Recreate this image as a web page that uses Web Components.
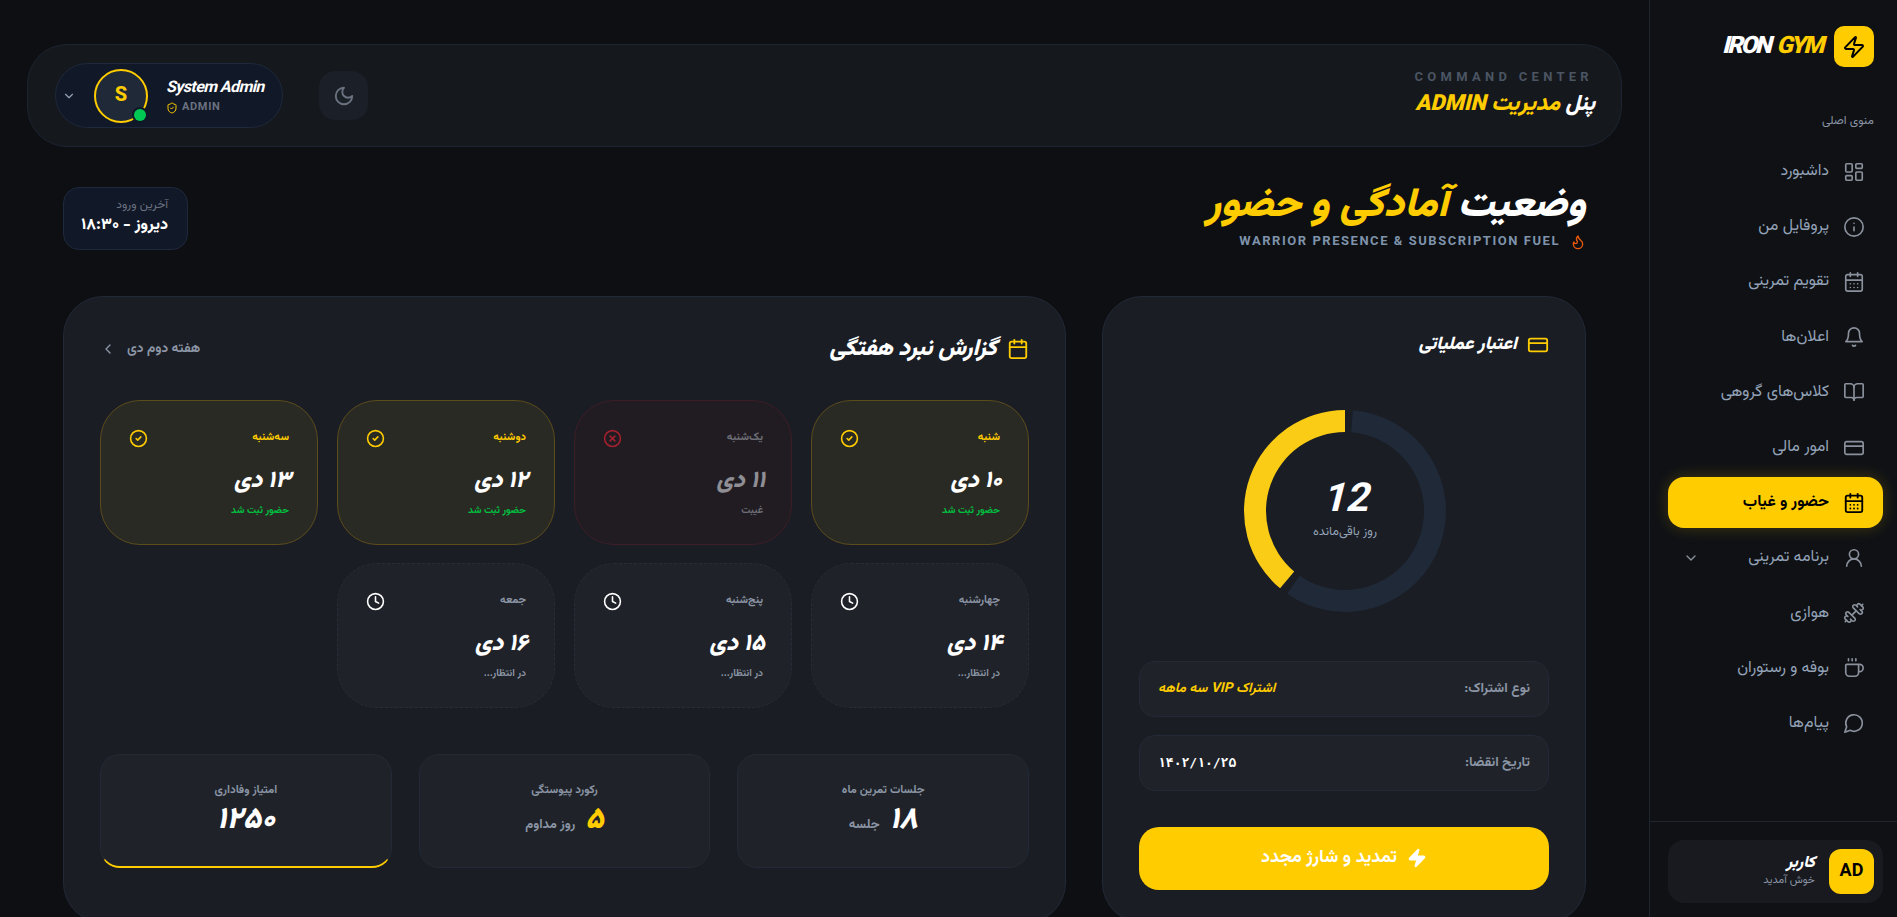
<!DOCTYPE html>
<html lang="fa" dir="rtl">
<head>
<meta charset="utf-8">
<title>Iron Gym</title>
<style>
  html, body { margin: 0; height: 917px; overflow: hidden; background: #0d0f13; }
  body { font-family: Vazirmatn, Roboto, sans-serif; color: #fff; }
</style>
</head>
<body>
<gym-app></gym-app>

<script>
const ICONS = {
  dashboard: '<rect width="7" height="9" x="3" y="3" rx="1"/><rect width="7" height="5" x="14" y="3" rx="1"/><rect width="7" height="9" x="14" y="12" rx="1"/><rect width="7" height="5" x="3" y="16" rx="1"/>',
  info: '<circle cx="12" cy="12" r="10"/><path d="M12 16v-4"/><path d="M12 8h.01"/>',
  days: '<path d="M8 2v4"/><path d="M16 2v4"/><rect width="18" height="18" x="3" y="4" rx="2"/><path d="M3 10h18"/><path d="M8 14h.01"/><path d="M12 14h.01"/><path d="M16 14h.01"/><path d="M8 18h.01"/><path d="M12 18h.01"/><path d="M16 18h.01"/>',
  calendar: '<path d="M8 2v4"/><path d="M16 2v4"/><rect width="18" height="18" x="3" y="4" rx="2"/><path d="M3 10h18"/>',
  bell: '<path d="M6 8a6 6 0 0 1 12 0c0 7 3 9 3 9H3s3-2 3-9"/><path d="M10.3 21a1.94 1.94 0 0 0 3.4 0"/>',
  book: '<path d="M12 7v14"/><path d="M3 18a1 1 0 0 1-1-1V4a1 1 0 0 1 1-1h5a4 4 0 0 1 4 4 4 4 0 0 1 4-4h5a1 1 0 0 1 1 1v13a1 1 0 0 1-1 1h-6a3 3 0 0 0-3 3 3 3 0 0 0-3-3z"/>',
  card: '<rect width="20" height="14" x="2" y="5" rx="2"/><line x1="2" x2="22" y1="10" y2="10"/>',
  user: '<circle cx="12" cy="8" r="5"/><path d="M20 21a8 8 0 0 0-16 0"/>',
  dumbbell: '<g transform="matrix(-1 0 0 1 24 0)"><path d="M14.4 14.4 9.6 9.6"/><path d="M18.657 21.485a2 2 0 1 1-2.829-2.828l-1.767 1.768a2 2 0 1 1-2.829-2.829l6.364-6.364a2 2 0 1 1 2.829 2.829l-1.768 1.767a2 2 0 1 1 2.828 2.829z"/><path d="m21.5 21.5-1.4-1.4"/><path d="M3.9 3.9 2.5 2.5"/><path d="M6.404 12.768a2 2 0 1 1-2.829-2.829l1.768-1.767a2 2 0 1 1-2.828-2.829l2.828-2.828a2 2 0 1 1 2.829 2.828l1.767-1.768a2 2 0 1 1 2.829 2.829z"/></g>',
  coffee: '<path d="M10 2v2"/><path d="M14 2v2"/><path d="M16 8a1 1 0 0 1 1 1v8a4 4 0 0 1-4 4H7a4 4 0 0 1-4-4V9a1 1 0 0 1 1-1h14a4 4 0 1 1 0 8h-1"/><path d="M6 2v2"/>',
  message: '<path d="M7.9 20A9 9 0 1 0 4 16.1L2 22Z"/>',
  chevronDown: '<path d="m6 9 6 6 6-6"/>',
  chevronLeft: '<path d="m15 18-6-6 6-6"/>',
  moon: '<path d="M12 3a6 6 0 0 0 9 9 9 9 0 1 1-9-9Z"/>',
  zap: '<path d="M4 14a1 1 0 0 1-.78-1.63l9.9-10.2a.5.5 0 0 1 .86.46l-1.92 6.02A1 1 0 0 0 13 10h7a1 1 0 0 1 .78 1.63l-9.9 10.2a.5.5 0 0 1-.86-.46l1.92-6.02A1 1 0 0 0 11 14z"/>',
  flame: '<path d="M8.5 14.5A2.5 2.5 0 0 0 11 12c0-1.38-.5-2-1-3-1.072-2.143-.224-4.054 2-6 .5 2.5 2 4.9 4 6.5 2 1.6 3 3.5 3 5.5a7 7 0 1 1-14 0c0-1.153.433-2.294 1-3a2.5 2.5 0 0 0 2.5 2.5z"/>',
  shield: '<path d="M20 13c0 5-3.5 7.5-7.66 8.95a1 1 0 0 1-.67-.01C7.5 20.5 4 18 4 13V6a1 1 0 0 1 1-1c2 0 4.5-1.2 6.24-2.72a1.17 1.17 0 0 1 1.52 0C14.51 3.81 17 5 19 5a1 1 0 0 1 1 1z"/><path d="m9 12 2 2 4-4"/>',
  check: '<circle cx="12" cy="12" r="10"/><path d="m9 12 2 2 4-4"/>',
  cross: '<circle cx="12" cy="12" r="10"/><path d="m15 9-6 6"/><path d="m9 9 6 6"/>',
  clock: '<circle cx="12" cy="12" r="10"/><polyline points="12 6 12 12 16 14"/>'
};

class GymIcon extends HTMLElement {
  connectedCallback() {
    const size = this.getAttribute("size") || 20;
    const width = this.getAttribute("stroke") || 2;
    const fill = this.hasAttribute("solid") ? "currentColor" : "none";
    this.attachShadow({ mode: "open" }).innerHTML = `
      <style>:host { display: inline-flex; flex: none; } svg { display: block; }</style>
      <svg width="${size}" height="${size}" viewBox="0 0 24 24" fill="${fill}" stroke="currentColor"
        stroke-width="${width}" stroke-linecap="round" stroke-linejoin="round">${ICONS[this.getAttribute("name")]}</svg>`;
  }
}

class NavItem extends HTMLElement {
  connectedCallback() {
    const active = this.hasAttribute("active");
    const more = this.hasAttribute("more") ? `<gym-icon class="more" name="chevronDown" size="16"></gym-icon>` : "";
    this.attachShadow({ mode: "open" }).innerHTML = `
      <style>
        :host { display: flex; align-items: center; gap: 14px; height: 51.2px; padding: 0 18px 0 15px;
          border-radius: 16px; color: #94a3b8; font-size: 16px; }
        :host([active]) { background: #ffcc00; color: #000; font-weight: 700; box-shadow: 0 0 16px rgba(255,204,0,.22); }
        .ic { color: #8a919c; display: flex; }
        :host([active]) .ic { color: #000; }
        .more { margin-right: auto; color: #8a919c; }
      </style>
      <span class="ic"><gym-icon name="${this.getAttribute("icon")}" size="22" stroke="${active ? 2 : 1.8}"></gym-icon></span>
      <slot></slot>${more}`;
  }
}

class GymSidebar extends HTMLElement {
  connectedCallback() {
    this.attachShadow({ mode: "open" }).innerHTML = `
      <style>
        :host { display: flex; flex-direction: column; width: 248px; height: 917px; flex: none; box-sizing: border-box;
          background: #0f1115; border-left: 1px solid #1e2430; }
        .logo { display: flex; align-items: center; gap: 12px; padding: 26px 23px 0 0; }
        .mark { width: 40px; height: 41px; border-radius: 10px; background: #ffcc00; color: #000;
          display: grid; place-items: center; }
        .brand { font-style: italic; font-weight: 900; font-size: 24px; line-height: 1; letter-spacing: -2.2px; word-spacing: 3px; direction: ltr; }
        .brand b { color: #ffcc00; font-weight: 900; }
        .caption { font-size: 12px; color: #8b95a5; padding: 47px 23px 0 0; line-height: 14px; }
        nav { display: flex; flex-direction: column; gap: 4px; padding: 18px 14px 0 18px; flex: 1; }
        .foot { border-top: 1px solid #1e2430; padding: 18px 14px 14px 18px; }
        .user { display: flex; align-items: center; gap: 14px; height: 63px; padding: 0 9px; background: #181a1f;
          border-radius: 16px; box-sizing: border-box; }
        .ava { width: 45px; height: 45px; border-radius: 12px; background: #ffcc00; color: #000; font-weight: 700;
          font-size: 18px; display: grid; place-items: center; }
        .who { font-size: 16px; font-weight: 900; font-style: italic; line-height: 19px; margin-top: -2px; }
        .hi { font-size: 11px; color: #8b95a5; line-height: 15px; }
      </style>
      <div class="logo">
        <span class="mark"><gym-icon name="zap" size="24"></gym-icon></span>
        <span class="brand">IRON <b>GYM</b></span>
      </div>
      <div class="caption">منوی اصلی</div>
      <nav>
        <nav-item icon="dashboard">داشبورد</nav-item>
        <nav-item icon="info">پروفایل من</nav-item>
        <nav-item icon="days">تقویم تمرینی</nav-item>
        <nav-item icon="bell">اعلان‌ها</nav-item>
        <nav-item icon="book">کلاس‌های گروهی</nav-item>
        <nav-item icon="card">امور مالی</nav-item>
        <nav-item icon="days" active>حضور و غیاب</nav-item>
        <nav-item icon="user" more>برنامه تمرینی</nav-item>
        <nav-item icon="dumbbell">هوازی</nav-item>
        <nav-item icon="coffee">بوفه و رستوران</nav-item>
        <nav-item icon="message">پیام‌ها</nav-item>
      </nav>
      <div class="foot">
        <div class="user">
          <span class="ava">AD</span>
          <div><div class="who">کاربر</div><div class="hi">خوش آمدید</div></div>
        </div>
      </div>`;
  }
}

class GymHeader extends HTMLElement {
  connectedCallback() {
    this.attachShadow({ mode: "open" }).innerHTML = `
      <style>
        :host { display: flex; align-items: center; height: 103px; box-sizing: border-box; padding: 0 26px 0 27px;
          background: #15181d; border: 1px solid #1c2431; border-radius: 40px; }
        .titles { flex: 1; }
        .cc { font-size: 13px; font-weight: 700; letter-spacing: .33em; color: #4b5563; line-height: 16px; margin-bottom: 5px; padding-right: 2px; }
        .panel { font-size: 22px; font-weight: 900; line-height: 28px; color: #ffcc00; font-style: italic; margin-bottom: 2px; }
        .panel span { color: #fff; }
        .moon { width: 49px; height: 49px; border-radius: 16px; background: #1b1f27; color: #6b7280; display: grid; place-items: center; margin-left: 36px; }
        .pill { display: flex; align-items: center; width: 228px; height: 65px; box-sizing: border-box; direction: ltr;
          background: #111827; border: 1px solid #1e293b; border-radius: 33px; padding-left: 6px; }
        .chev { color: #94a3b8; }
        .avatar { position: relative; width: 54px; height: 54px; box-sizing: border-box; border: 2px solid #ffcc00; border-radius: 50%;
          background: #1f2937; color: #ffcc00; font-weight: 800; font-size: 20px; display: grid; place-items: center; margin-left: 18px; }
        .dot { position: absolute; right: 0; bottom: 0; width: 12px; height: 12px; background: #00c853; border-radius: 50%; box-shadow: 0 0 0 2px #111827; }
        .id { margin-left: 18px; padding-top: 3px; }
        .name { font-style: italic; font-weight: 700; font-size: 16px; line-height: 20px; letter-spacing: -.6px; white-space: nowrap; }
        .role { display: flex; align-items: center; gap: 4px; font-size: 11px; font-weight: 700; letter-spacing: .06em; color: #6b7280; line-height: 16px; margin-top: 1px; }
        .role gym-icon { color: #ffcc00; }
      </style>
      <div class="titles">
        <div class="cc">COMMAND CENTER</div>
        <div class="panel"><span>پنل</span> مدیریت ADMIN</div>
      </div>
      <div class="moon"><gym-icon name="moon" size="22"></gym-icon></div>
      <div class="pill">
        <gym-icon class="chev" name="chevronDown" size="14"></gym-icon>
        <div class="avatar">S<span class="dot"></span></div>
        <div class="id">
          <div class="name">System Admin</div>
          <div class="role"><gym-icon name="shield" size="12"></gym-icon>ADMIN</div>
        </div>
      </div>`;
  }
}

class PageHead extends HTMLElement {
  connectedCallback() {
    this.attachShadow({ mode: "open" }).innerHTML = `
      <style>
        :host { display: flex; align-items: flex-start; justify-content: space-between; padding: 0 36px; box-sizing: border-box; height: 148.5px; }
        h1 { margin: 0; padding-top: 31px; font-size: 40px; line-height: 56px; font-weight: 900; font-style: italic; color: #ffcc00; }
        h1 span { color: #fff; }
        .sub { display: flex; align-items: center; gap: 10px; font-size: 13px; font-weight: 700; letter-spacing: .118em; color: #7f93ab; line-height: 18px; margin-top: -1px; }
        .sub gym-icon { color: #ea580c; }
        .last { width: 125px; height: 63px; box-sizing: border-box; margin-top: 40px; padding: 9px 19px 0 0; background: #111827;
          border: 1px solid #1e293b; border-radius: 16px; }
        .last div { font-size: 12px; color: #6b7280; line-height: 16px; }
        .last b { font-size: 16px; font-weight: 800; line-height: 20px; margin-top: 3px; display: block; white-space: nowrap; }
      </style>
      <div>
        <h1><span>وضعیت</span> آمادگی و حضور</h1>
        <div class="sub"><gym-icon name="flame" size="16"></gym-icon>WARRIOR PRESENCE &amp; SUBSCRIPTION FUEL</div>
      </div>
      <div class="last"><div>آخرین ورود</div><b>دیروز - ۱۸:۳۰</b></div>`;
  }
}

class InfoRow extends HTMLElement {
  connectedCallback() {
    this.attachShadow({ mode: "open" }).innerHTML = `
      <style>
        :host { display: flex; align-items: center; justify-content: space-between; height: 56px; box-sizing: border-box; padding: 0 18px;
          background: #1f2329; border: 1px solid #232a36; border-radius: 16px; font-size: 13.6px; font-weight: 700; }
        .l { color: #8b95a5; }
      </style>
      <span class="l">${this.getAttribute("label")}</span><slot></slot>`;
  }
}

class SubCard extends HTMLElement {
  connectedCallback() {
    this.attachShadow({ mode: "open" }).innerHTML = `
      <style>
        :host { display: block; box-sizing: border-box; padding: 34px 36px 32px; background: #1a1d24; border: 1px solid #212936; border-radius: 40px; }
        h2 { display: flex; align-items: center; gap: 10px; margin: 0; font-size: 18px; line-height: 28px; font-weight: 900; font-style: italic; }
        h2 gym-icon { color: #ffcc00; }
        .ring { position: relative; left: 1px; width: 204px; height: 204px; margin: 50px auto 48px; }
        .ring svg { display: block; }
        .center { position: absolute; inset: 0; display: flex; flex-direction: column; align-items: center; justify-content: center; margin-top: -2px; }
        .num { font-style: italic; font-weight: 700; font-size: 40px; line-height: 44px; }
        .cap { font-size: 12.5px; color: #94a3b8; line-height: 18px; }
        .rows { display: flex; flex-direction: column; gap: 18px; }
        .vip { color: #ffcc00; font-style: italic; }
        .date { font-family: "DejaVu Sans Mono", monospace; font-size: 13px; }
        .btn { display: flex; align-items: center; justify-content: center; gap: 10px; height: 63px; margin-top: 36px; border-radius: 20px;
          background: #ffcc00; color: #fff; font-size: 18px; font-weight: 700; }
      </style>
      <h2><gym-icon name="card" size="22"></gym-icon>اعتبار عملیاتی</h2>
      <div class="ring">
        <svg width="204" height="204" viewBox="-102 -102 204 204">
          <path id="track" fill="#1f2937"></path>
          <path id="fuel" fill="#facc15"></path>
        </svg>
        <div class="center"><div class="num">12</div><div class="cap">روز باقی‌مانده</div></div>
      </div>
      <div class="rows">
        <info-row label="نوع اشتراک:"><span class="vip">اشتراک VIP سه ماهه</span></info-row>
        <info-row label="تاریخ انقضا:"><span class="date">۱۴۰۲/۱۰/۲۵</span></info-row>
      </div>
      <div class="btn"><gym-icon name="zap" size="20" solid></gym-icon>تمدید و شارژ مجدد</div>`;

    // angles run counter-clockwise from twelve o'clock, same as the chart in the app
    const slice = (from, to) => {
      const pt = (r, a) => {
        const t = a * Math.PI / 180;
        return `${(-r * Math.sin(t)).toFixed(2)} ${(-r * Math.cos(t)).toFixed(2)}`;
      };
      const large = to - from > 180 ? 1 : 0;
      return `M${pt(101, from)}A101 101 0 ${large} 0 ${pt(101, to)}L${pt(79, to)}A79 79 0 ${large} 1 ${pt(79, from)}Z`;
    };
    this.shadowRoot.getElementById("fuel").setAttribute("d", slice(0, 140));
    this.shadowRoot.getElementById("track").setAttribute("d", slice(145, 355.5));
  }
}

class DayCard extends HTMLElement {
  connectedCallback() {
    const state = this.getAttribute("state");
    const icon = { present: "check", absent: "cross", pending: "clock" }[state];
    this.attachShadow({ mode: "open" }).innerHTML = `
      <style>
        :host { display: block; box-sizing: border-box; height: 145px; padding: 29px 28px 0 28px; border-radius: 40px; border: 1px solid; }
        :host([state=present]) { background: #2a2a24; border-color: #5c4c1c; }
        :host([state=absent]) { background: #201c22; border-color: #3d1d26; }
        :host([state=pending]) { background: #1f2228; border: 1px dashed #262d39; }
        .top { display: flex; justify-content: space-between; align-items: flex-start; height: 20px; }
        .day { font-size: 11px; font-weight: 700; line-height: 16px; color: #8b95a5; }
        :host([state=present]) .day { color: #ffcc00; }
        :host([state=absent]) .day { color: #6e6e76; }
        .ic { color: #fff; display: flex; margin-top: -1px; }
        :host([state=present]) .ic { color: #ffcc00; }
        :host([state=absent]) .ic { color: #a3202e; }
        .date { margin-top: 14px; margin-right: -2px; font-size: 23px; font-weight: 900; font-style: italic; line-height: 34px; }
        :host([state=absent]) .date { color: #8e8e94; }
        .st { font-size: 10px; font-weight: 700; line-height: 16px; color: #8b95a5; margin-top: 5px; }
        :host([state=present]) .st { color: #00c040; }
        :host([state=absent]) .st { color: #6e6e76; }
      </style>
      <div class="top"><span class="day">${this.getAttribute("day")}</span><span class="ic"><gym-icon name="${icon}" size="19"></gym-icon></span></div>
      <div class="date">${this.getAttribute("date")}</div>
      <div class="st">${this.getAttribute("status")}</div>`;
  }
}

class StatCard extends HTMLElement {
  connectedCallback() {
    this.attachShadow({ mode: "open" }).innerHTML = `
      <style>
        :host { display: flex; flex-direction: column; align-items: center; height: 114px; box-sizing: border-box; padding-top: 27px; background: #1f2329;
          border: 1px solid #232a36; border-radius: 20px; }
        :host([accent]) { border-bottom: 2px solid #ffcc00; }
        .l { font-size: 11.5px; font-weight: 700; color: #8b95a5; line-height: 16px; }
        .v { display: flex; align-items: baseline; gap: 10px; margin-top: 4px; font-size: 30px; font-weight: 900; font-style: italic; line-height: 38px; }
        .v span { font-size: 13px; font-weight: 700; font-style: normal; color: #8b95a5; }
        .v span:empty { display: none; }
        :host([gold]) .v { color: #ffcc00; }
      </style>
      <div class="l">${this.getAttribute("label")}</div>
      <div class="v">${this.getAttribute("value")}<span>${this.getAttribute("unit") || ""}</span></div>`;
  }
}

class WeekCard extends HTMLElement {
  connectedCallback() {
    this.attachShadow({ mode: "open" }).innerHTML = `
      <style>
        :host { display: block; box-sizing: border-box; padding: 36px 36px 0; background: #1a1d24; border: 1px solid #212936; border-radius: 40px; }
        .head { display: flex; align-items: center; justify-content: space-between; height: 32px; }
        h2 { display: flex; align-items: center; gap: 10px; margin: 0; font-size: 23px; font-weight: 900; font-style: italic; }
        h2 gym-icon { color: #ffcc00; }
        .nav { display: flex; align-items: center; gap: 11px; font-size: 13.5px; font-weight: 700; color: #8b95a5; }
        .days { display: grid; grid-template-columns: repeat(4, 1fr); gap: 18.5px 19px; margin-top: 35px; }
        .stats { display: grid; grid-template-columns: repeat(3, 1fr); gap: 27px; margin-top: 46px; }
      </style>
      <div class="head">
        <h2><gym-icon name="calendar" size="22"></gym-icon>گزارش نبرد هفتگی</h2>
        <div class="nav">هفته دوم دی<gym-icon name="chevronLeft" size="16"></gym-icon></div>
      </div>
      <div class="days">
        <day-card state="present" day="شنبه" date="۱۰ دی" status="حضور ثبت شد"></day-card>
        <day-card state="absent" day="یک‌شنبه" date="۱۱ دی" status="غیبت"></day-card>
        <day-card state="present" day="دوشنبه" date="۱۲ دی" status="حضور ثبت شد"></day-card>
        <day-card state="present" day="سه‌شنبه" date="۱۳ دی" status="حضور ثبت شد"></day-card>
        <day-card state="pending" day="چهارشنبه" date="۱۴ دی" status="در انتظار..."></day-card>
        <day-card state="pending" day="پنج‌شنبه" date="۱۵ دی" status="در انتظار..."></day-card>
        <day-card state="pending" day="جمعه" date="۱۶ دی" status="در انتظار..."></day-card>
      </div>
      <div class="stats">
        <stat-card label="جلسات تمرین ماه" value="۱۸" unit="جلسه"></stat-card>
        <stat-card gold label="رکورد پیوستگی" value="۵" unit="روز مداوم"></stat-card>
        <stat-card accent label="امتیاز وفاداری" value="۱۲۵۰"></stat-card>
      </div>`;
  }
}

class GymApp extends HTMLElement {
  connectedCallback() {
    this.attachShadow({ mode: "open" }).innerHTML = `
      <style>
        :host { display: flex; height: 917px; overflow: hidden; }
        main { flex: 1; min-width: 0; padding: 44px 27px 0; background: #0d0f13; }
        .cols { display: grid; grid-template-columns: 484px 1fr; gap: 36px; height: 627px; margin: 0 36px; }
      </style>
      <gym-sidebar></gym-sidebar>
      <main>
        <gym-header></gym-header>
        <page-head></page-head>
        <div class="cols">
          <sub-card></sub-card>
          <week-card></week-card>
        </div>
      </main>`;
  }
}

customElements.define("gym-icon", GymIcon);
customElements.define("nav-item", NavItem);
customElements.define("gym-sidebar", GymSidebar);
customElements.define("gym-header", GymHeader);
customElements.define("page-head", PageHead);
customElements.define("info-row", InfoRow);
customElements.define("sub-card", SubCard);
customElements.define("day-card", DayCard);
customElements.define("stat-card", StatCard);
customElements.define("week-card", WeekCard);
customElements.define("gym-app", GymApp);
</script>
</body>
</html>
